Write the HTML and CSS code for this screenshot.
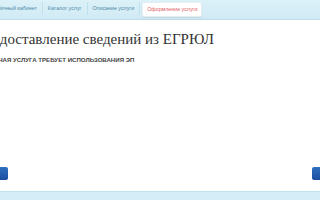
FILE: index.html
```html
<!DOCTYPE html>
<html lang="ru">
<head>
<meta charset="utf-8">
<link rel="stylesheet" href="styles.css">
</head>
<body>
<div class="page">
  <nav class="tabs">
    <span class="tab">Личный кабинет</span>
    <span class="tab">Каталог услуг</span>
    <span class="tab">Описание услуги</span>
    <span class="tab active">Оформление услуги</span>
  </nav>
  <main class="content">
    <h1 class="title">Предоставление сведений из ЕГРЮЛ</h1>
    <p class="note">Данная услуга требует использования ЭП</p>
    <div class="spacer"></div>
    <div class="actions">
      <span class="btn"></span>
      <span class="btn"></span>
    </div>
  </main>
  <footer class="foot"></footer>
</div>
</body>
</html>
```
FILE: styles.css
```css
html, body {
  margin: 0;
  padding: 0;
  width: 320px;
  height: 200px;
  overflow: hidden;
  background: #fff;
}
.page {
  width: 320px;
  height: 200px;
  display: flex;
  flex-direction: column;
  overflow: hidden;
}
.tabs {
  height: 20px;
  flex: none;
  background: linear-gradient(#dcf1f8, #d0eaf4);
  border-bottom: 1px solid #bcdce8;
  display: flex;
  align-items: flex-start;
  padding-top: 2px;
  margin-left: -8px;
  box-sizing: border-box;
  font-family: "Liberation Sans", Arial, sans-serif;
  font-size: 5.3px;
  color: #4f8aa8;
  white-space: nowrap;
}
.tab {
  padding: 0 5px;
  height: 13px;
  line-height: 13px;
  border-right: 1px solid #c2e0ea;
}
.tab.active {
  margin-left: 2px;
  background: #fff;
  color: #e25b5b;
  border-radius: 2px;
  border: 1px solid #e4eef2;
  box-shadow: 0 1px 1px rgba(0,0,0,0.08);
  padding: 0 4px;
}
.content {
  flex: 1;
  display: flex;
  flex-direction: column;
}
.title {
  margin: 10px 0 0 -25px;
  font-family: "Liberation Serif", "Times New Roman", serif;
  font-weight: normal;
  font-size: 15px;
  line-height: 18px;
  color: #333;
  white-space: nowrap;
}
.note {
  margin: 8px 0 0 -15px;
  font-family: "Liberation Sans", Arial, sans-serif;
  font-weight: bold;
  font-size: 6.1px;
  line-height: 8px;
  text-transform: uppercase;
  color: #444;
  white-space: nowrap;
}
.spacer { flex: 1; }
.actions {
  display: flex;
  justify-content: space-between;
  margin-bottom: 11px;
}
.btn {
  width: 10px;
  height: 13px;
  background: linear-gradient(#2f6fc0, #1b4fa0);
  border-radius: 2px;
}
.btn:first-child { margin-left: -2px; }
.btn:last-child { margin-right: -2px; }
.foot {
  height: 8px;
  flex: none;
  background: #d4edf6;
  border-top: 1px solid #c2e3ee;
}
```
